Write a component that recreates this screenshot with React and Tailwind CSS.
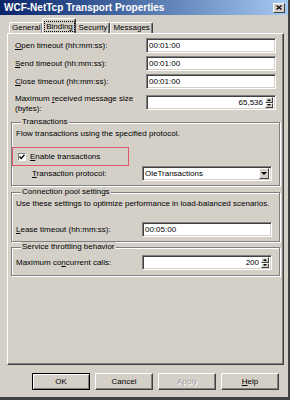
import React from 'react'

const FACE = 'bg-[#d4d0c8]'

function Sunken({ children, className = '' }) {
    return (
        <div
            className={`flex items-center h-[15px] w-[130px] bg-white border border-t-[#808080] border-l-[#808080] border-b-white border-r-white shadow-[inset_1px_1px_0_#404040,inset_-1px_-1px_0_#d4d0c8] ${className}`}
        >
            {children}
        </div>
    )
}

function TextBox({ value }) {
    return (
        <Sunken>
            <span className="pl-[2px] text-[8px] leading-none">{value}</span>
        </Sunken>
    )
}

function SpinBox({ value }) {
    return (
        <Sunken className="pr-[2px]">
            <span className="flex-1 pr-[2px] text-right text-[8px] leading-none">{value}</span>
            <div className="flex flex-col w-[8px] h-[11px]">
                <div className="flex items-center justify-center flex-1 border border-t-white border-l-white border-b-[#404040] border-r-[#404040] bg-[#d4d0c8]">
                    <div className="w-0 h-0 border-x-[2px] border-x-transparent border-b-[2px] border-b-black" />
                </div>
                <div className="flex items-center justify-center flex-1 border border-t-white border-l-white border-b-[#404040] border-r-[#404040] bg-[#d4d0c8]">
                    <div className="w-0 h-0 border-x-[2px] border-x-transparent border-t-[2px] border-t-black" />
                </div>
            </div>
        </Sunken>
    )
}

function Select({ value }) {
    return (
        <Sunken className="pr-[2px]">
            <span className="flex-1 pl-[2px] text-[8px] leading-none">{value}</span>
            <div className="flex items-center justify-center w-[10px] h-[11px] border border-t-white border-l-white border-b-[#404040] border-r-[#404040] bg-[#d4d0c8]">
                <div className="w-0 h-0 border-x-[3px] border-x-transparent border-t-[3px] border-t-black" />
            </div>
        </Sunken>
    )
}

function Button({ children, disabled, isDefault }) {
    return (
        <div
            className={`flex items-center justify-center w-[58px] h-[17px] ${FACE} text-[8px] border ${
                isDefault
                    ? 'border-black shadow-[inset_1px_1px_0_white,inset_-1px_-1px_0_#808080]'
                    : 'border-t-white border-l-white border-b-[#404040] border-r-[#404040] shadow-[inset_-1px_-1px_0_#808080]'
            } ${disabled ? 'text-[#a0a0a0] [text-shadow:1px_1px_0_white]' : 'text-black'}`}
        >
            {children}
        </div>
    )
}

function Group({ title, children, className = '' }) {
    return (
        <fieldset
            className={`mx-[3px] px-[4px] border border-[#808080] shadow-[inset_1px_1px_0_white,1px_1px_0_white] ${className}`}
        >
            <legend className={`ml-[5px] px-[1px] ${FACE} text-[8px] leading-[10px]`}>{title}</legend>
            {children}
        </fieldset>
    )
}

function Tab({ label, active }) {
    if (active) {
        return (
            <div className={`relative z-10 -mx-[1px] flex items-center justify-center w-[34px] h-[15px] ${FACE} border-t border-l border-t-white border-l-white border-r border-r-[#404040] shadow-[inset_-1px_0_0_#808080] rounded-t-[2px]`}>
                <span className="px-[1px] text-[8px] leading-[9px] outline outline-1 outline-dotted outline-black">{label}</span>
            </div>
        )
    }
    return (
        <div className={`flex items-center justify-center h-[11px] px-[2px] ${FACE} border-t border-l border-t-white border-l-white border-r border-r-[#404040] shadow-[inset_-1px_0_0_#808080] rounded-t-[2px] text-[8px]`}>
            {label}
        </div>
    )
}

function Row({ label, children, className = '' }) {
    return (
        <div className={`flex items-center justify-between ${className}`}>
            <span className="text-[8px] leading-[10px]">{label}</span>
            {children}
        </div>
    )
}

export default function App() {
    return (
        <div
            className={`flex flex-col w-[290px] h-[400px] ${FACE} text-black border-r-2 border-r-[#404040] border-b-[3px] border-b-[#404040] overflow-hidden`}
            style={{ fontFamily: '"Liberation Sans", Arial, sans-serif' }}
        >
            {/* Title bar */}
            <div className="flex items-center justify-between h-[15px] pl-[4px] pr-[3px] bg-gradient-to-r from-[#0a246a] to-[#a6caf0]">
                <span className="text-[10px] font-bold text-white leading-none">WCF-NetTcp Transport Properties</span>
                <div className={`flex items-center justify-center w-[12px] h-[10px] ${FACE} border border-t-white border-l-white border-b-[#404040] border-r-[#404040]`}>
                    <svg width="6" height="5" viewBox="0 0 6 5">
                        <path d="M0.5 0.5 L5.5 4.5 M5.5 0.5 L0.5 4.5" stroke="black" strokeWidth="1.2" />
                    </svg>
                </div>
            </div>

            {/* Tabs */}
            <div className="flex items-end h-[18px] pl-[9px]">
                <Tab label="General" />
                <Tab label="Binding" active />
                <Tab label="Security" />
                <Tab label="Messages" />
            </div>

            {/* Tab panel */}
            <div className="flex flex-col ml-[7px] w-[277px] h-[332px] border border-t-white border-l-white border-b-[#404040] border-r-[#404040] shadow-[inset_-1px_-1px_0_#808080] pt-[4px]">
                <div className="flex flex-col gap-[3px] pl-[7px] pr-[7px]">
                    <Row label={<><u>O</u>pen timeout (hh:mm:ss):</>}>
                        <TextBox value="00:01:00" />
                    </Row>
                    <Row label={<><u>S</u>end timeout (hh:mm:ss):</>}>
                        <TextBox value="00:01:00" />
                    </Row>
                    <Row label={<><u>C</u>lose timeout (hh:mm:ss):</>}>
                        <TextBox value="00:01:00" />
                    </Row>
                    <div className="flex items-start justify-between mt-[2px]">
                        <span className="text-[8px] leading-[10px]">
                            Maximum <u>r</u>eceived message size
                            <br />
                            (bytes):
                        </span>
                        <div className="mt-[1px]">
                            <SpinBox value="65,536" />
                        </div>
                    </div>
                </div>

                {/* Transactions */}
                <Group title="Transactions" className="mt-[3px] pb-[4px]">
                    <div className="mt-[2px] text-[8px] leading-[10px]">Flow transactions using the specified protocol.</div>
                    <div className="flex items-center w-[117px] h-[19px] -ml-[4px] mt-[8px] pl-[5px] border border-[#dc5868]">
                        <div className="flex items-center justify-center w-[8px] h-[8px] bg-white border border-t-[#808080] border-l-[#808080] border-b-white border-r-white">
                            <svg width="6" height="6" viewBox="0 0 6 6">
                                <path d="M0.5 2.5 L2.2 4.5 L5.5 0.8" fill="none" stroke="black" strokeWidth="1.3" />
                            </svg>
                        </div>
                        <span className="ml-[4px] text-[8px] leading-[10px]">
                            <u>E</u>nable transactions
                        </span>
                    </div>
                    <Row className="pl-[16px] pr-[3px]" label={<><u>T</u>ransaction protocol:</>}>
                        <Select value="OleTransactions" />
                    </Row>
                </Group>

                {/* Connection pool */}
                <Group title="Connection pool settings" className="mt-[1px] pb-[4px]">
                    <div className="mt-[2px] text-[8px] leading-[10px]">
                        Use these settings to optimize performance in load-balanced scenarios.
                    </div>
                    <Row className="mt-[13px] pr-[3px]" label={<><u>L</u>ease timeout (hh:mm:ss):</>}>
                        <TextBox value="00:05:00" />
                    </Row>
                </Group>

                {/* Service throttling */}
                <Group title="Service throttling behavior" className="mt-[0px] pb-[5px]">
                    <Row className="mt-[3px] pr-[3px]" label={<>Maximum co<u>n</u>current calls:</>}>
                        <SpinBox value="200" />
                    </Row>
                </Group>
            </div>

            {/* Buttons */}
            <div className="flex justify-end gap-[5px] pr-[9px] mt-[8px]">
                <Button isDefault>OK</Button>
                <Button>Cancel</Button>
                <Button disabled>Apply</Button>
                <Button>
                    <span>
                        <u>H</u>elp
                    </span>
                </Button>
            </div>
        </div>
    )
}
